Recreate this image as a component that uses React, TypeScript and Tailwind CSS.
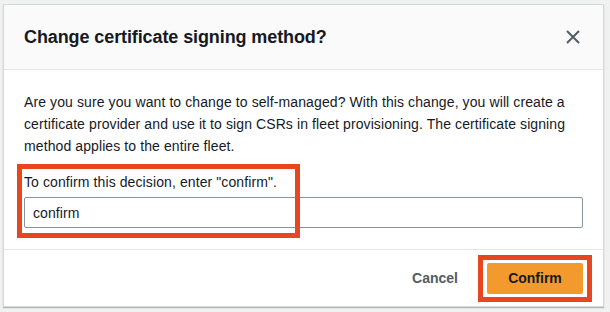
import React from "react";

const font = { fontFamily: '"Liberation Sans", Arial, sans-serif' };

export default function App() {
  return (
    <div className="w-[610px] h-[312px] bg-[#f0f1f1] pt-[4px] pl-[3px]" style={font}>
      <div className="relative w-[601px] h-[303px] bg-white border border-[#d5d9d9] shadow-[0_1px_1px_rgba(0,0,0,0.25)] flex flex-col text-[#16191f]">
        {/* Header */}
        <div className="h-[65px] shrink-0 bg-[#fafafa] border-b border-[#e5e7e7] flex items-center justify-between pl-[20px] pr-[20px]">
          <h1 className="text-[18px] font-bold tracking-[-0.1px]">Change certificate signing method?</h1>
          <button className="w-[20px] h-[20px] flex items-center justify-center text-[#545b64]">
            <svg width="14" height="14" viewBox="0 0 14 14" fill="none" stroke="currentColor" strokeWidth="2">
              <path d="M1 1 L13 13 M13 1 L1 13" />
            </svg>
          </button>
        </div>

        {/* Body */}
        <div className="relative flex-1 px-[20px] pt-[21px] tracking-[0.1px]">
          <p className="text-[14px] leading-[22px]">
            Are you sure you want to change to self-managed? With this change, you will create a
            certificate provider and use it to sign CSRs in fleet provisioning. The certificate signing
            method applies to the entire fleet.
          </p>
          <div className="mt-[14px]">
            <label className="block text-[14px] leading-[22px]">To confirm this decision, enter "confirm".</label>
            <input
              readOnly
              value="confirm"
              className="mt-[4px] w-full h-[31px] border border-[#879596] rounded-[2px] px-[8px] text-[14px] text-[#16191f] outline-none"
              style={font}
            />
          </div>
          <div className="absolute left-[13px] top-[94px] w-[283px] h-[74px] border-[5px] border-[#e8461e] pointer-events-none" />
        </div>

        {/* Footer */}
        <div className="h-[57px] shrink-0 border-t border-[#e5e7e7] flex items-center justify-end pr-[11px]">
          <button className="h-[31px] px-[20px] text-[14px] font-bold text-[#545b64]">Cancel</button>
          <div className="border-[5px] border-[#e8461e] px-[4px] py-[3px]">
            <button className="w-[96px] h-[31px] bg-[#f29a2e] rounded-[2px] text-[14px] font-bold text-[#16191f]">
              Confirm
            </button>
          </div>
        </div>
      </div>
    </div>
  );
}
